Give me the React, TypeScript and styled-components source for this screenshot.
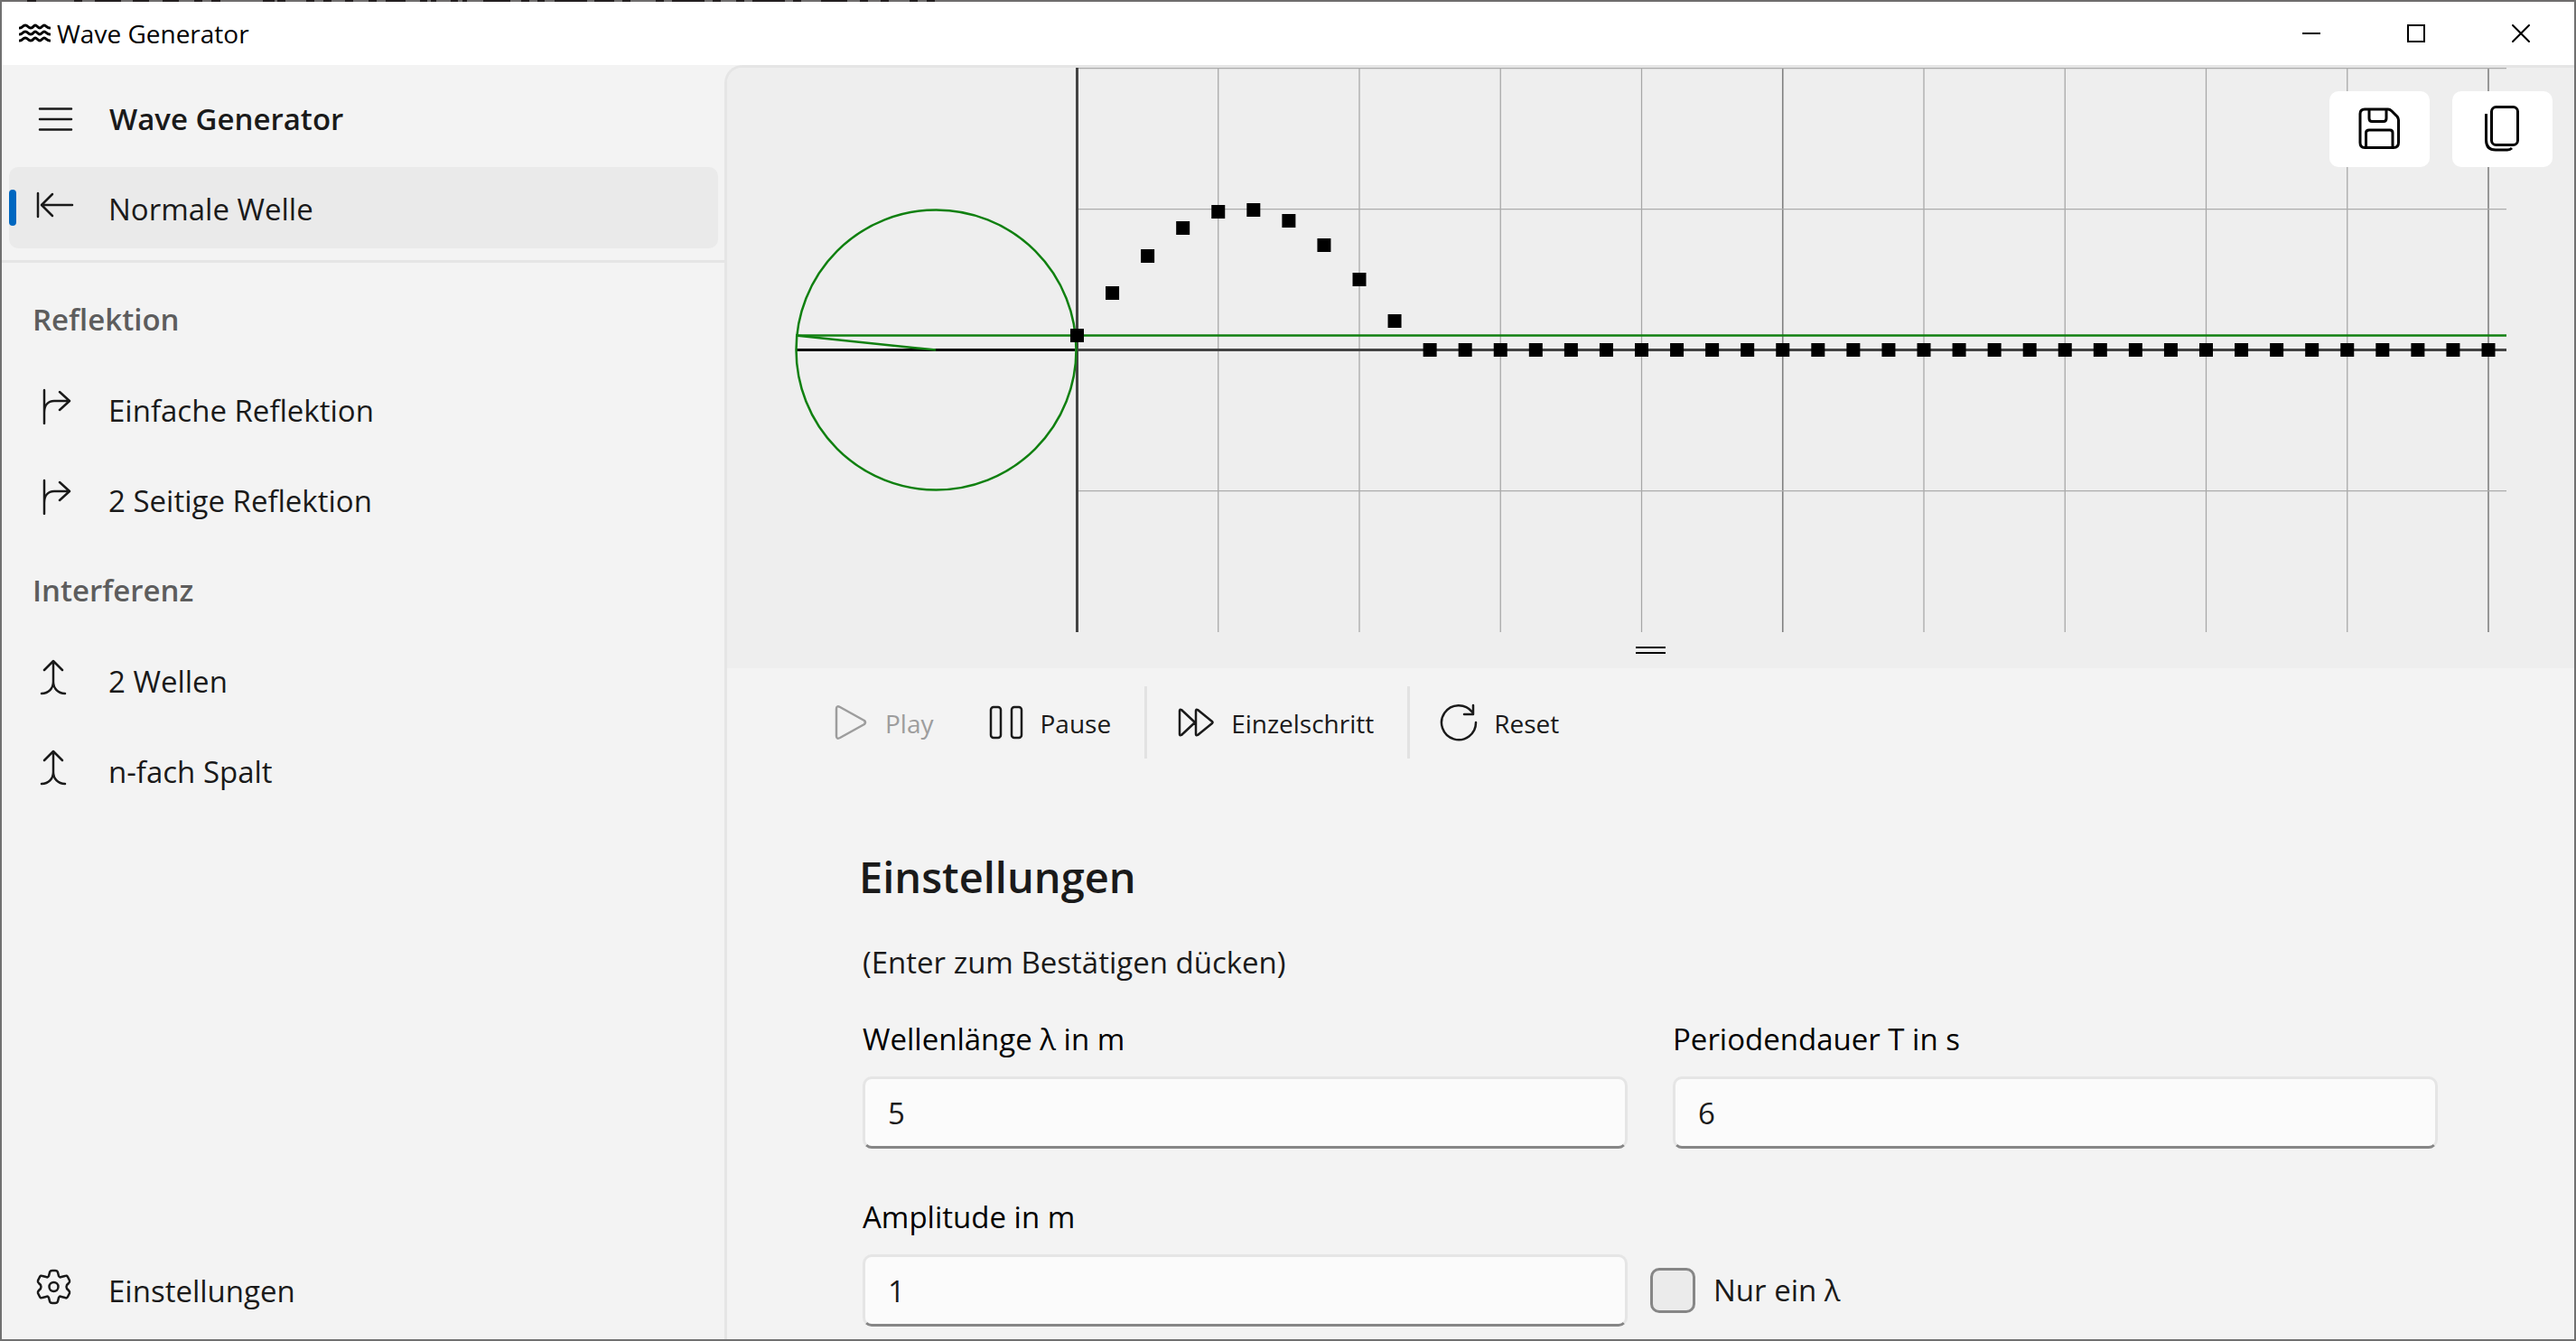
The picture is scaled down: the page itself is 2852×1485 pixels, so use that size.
import React, { useState } from "react";
import styled, { createGlobalStyle, css } from "styled-components";

const GlobalStyle = createGlobalStyle`
  * { box-sizing: border-box; }
  html, body { margin: 0; height: 100%; }
  #root { height: 100%; }
  body, button, input { font-family: "Open Sans", "Noto Sans", sans-serif; }
  body { color: #1a1a1a; font-size: 33px; line-height: 44px; background: #f3f3f3; }
`;

/* Dark runs of the lettering behind the window that show through its top edge. */
const edgeRuns = [
  [30, 40], [82, 91], [105, 134], [147, 165], [180, 198], [215, 224], [234, 244],
  [291, 304], [307, 316], [339, 348], [358, 367], [382, 391], [408, 417], [427, 449],
  [465, 473], [477, 483], [499, 507], [512, 517], [535, 565], [577, 586], [595, 603],
  [614, 650], [658, 680], [689, 698], [726, 735], [744, 780], [789, 798], [815, 824],
  [833, 869], [878, 887], [909, 938], [952, 961], [975, 984], [1007, 1016], [1026, 1035],
];

const edgeStops = edgeRuns
  .map(([a, b]) => `#6f6d6d ${a}px, #231f20 ${a}px ${b}px, #6f6d6d ${b}px`)
  .join(", ");

const Window = styled.div`
  display: flex;
  flex-direction: column;
  height: 100vh;
  border: 2px solid #707070;
  border-top-width: 0;
  overflow: hidden;
`;

const TopEdge = styled.div`
  flex: none;
  height: 2px;
  margin: 0 -2px;
  background: linear-gradient(90deg, ${edgeStops});
`;

const TitleBar = styled.header`
  flex: none;
  display: flex;
  align-items: center;
  height: 70px;
  padding: 0 1px 0 19px;
  background: #fff;
  color: #000;
  font-size: 28px;
`;

const AppName = styled.span`
  flex: 1;
  padding-left: 7px;
`;

const CaptionButton = styled.button`
  display: grid;
  place-items: center;
  width: 116px;
  height: 100%;
  padding: 0;
  border: 0;
  background: none;
  color: #000;
`;

const Body = styled.div`
  flex: 1;
  display: flex;
  min-height: 0;
`;

const Sidebar = styled.nav`
  flex: none;
  display: flex;
  flex-direction: column;
  width: 800px;
  padding: 8px 0 5px;
`;

const rowBox = css`
  display: flex;
  align-items: center;
  width: 100%;
  height: 100px;
`;

const PaneHeader = styled.div`
  ${rowBox}
  padding-top: 4px;
  font-weight: 600;
`;

const MenuButton = styled.button`
  display: grid;
  place-items: center start;
  width: 119px;
  height: 90px;
  padding: 0 0 0 39px;
  border: 0;
  background: none;
  color: inherit;
`;

const GroupTitle = styled.h2`
  ${rowBox}
  margin: 0;
  padding: 2px 0 0 34px;
  color: #5d5d5d;
  font-size: 33px;
  font-weight: 600;
`;

const NavButton = styled.button<{ $active?: boolean }>`
  display: flex;
  align-items: center;
  height: 90px;
  margin: 5px 7px 5px 8px;
  padding: 0;
  border: 0;
  border-radius: 10px;
  background: ${(p) => (p.$active ? "#eaeaea" : "none")};
  color: inherit;
  font-size: 33px;
  line-height: 44px;
  text-align: left;

  &::before {
    content: "";
    width: 8px;
    height: 40px;
    margin-right: 22px;
    border-radius: 4px;
    background: ${(p) => (p.$active ? "#0067c0" : "none")};
  }
`;

const NavIcon = styled.span`
  display: flex;
  width: 80px;
  padding-bottom: 6px;
`;

const NavLabel = styled.span`
  padding-top: 4px;
`;

const Rule = styled.hr`
  width: 100%;
  height: 3px;
  margin: 8px 0 12px;
  border: 0;
  background: #e5e5e5;
`;

const Spacer = styled.div`
  flex: 1;
`;

const Main = styled.main`
  position: relative;
  flex: 1;
  display: flex;
  flex-direction: column;
  min-width: 0;
  border: solid #e5e5e5;
  border-width: 3px 0 0 3px;
  border-radius: 20px 0 0 0;
  overflow: hidden;
`;

const ChartPane = styled.section`
  flex: none;
  background: #eeeeee;
`;

const Chart = styled.svg`
  display: block;
  width: 100%;
  height: auto;
`;

const Splitter = styled.button`
  display: flex;
  flex-direction: column;
  align-items: center;
  gap: 4px;
  width: 100%;
  height: 40px;
  padding: 16px 0 0;
  border: 0;
  background: none;
`;

const SplitterLine = styled.span`
  width: 33px;
  height: 2px;
  background: #000;
`;

const ChartActions = styled.div`
  position: absolute;
  top: 26px;
  right: 24px;
  display: flex;
  gap: 25px;
`;

const ActionButton = styled.button`
  display: grid;
  place-items: center;
  width: 111px;
  height: 84px;
  padding: 0 2px 2px 0;
  border: 0;
  border-radius: 10px;
  background: #fff;
  color: #000;
`;

const Toolbar = styled.div`
  flex: none;
  display: flex;
  align-items: center;
  height: 120px;
  padding-left: 94px;
`;

const ToolButton = styled.button`
  display: flex;
  align-items: center;
  gap: 18px;
  height: 80px;
  padding: 0 37px 0 23px;
  border: 0;
  background: none;
  color: #1a1a1a;
  font-size: 28px;
  line-height: 40px;

  &:disabled { color: #9d9d9d; }
`;

const ToolLabel = styled.span`
  padding-top: 2px;
`;

const ToolDivider = styled.span`
  width: 3px;
  height: 80px;
  margin-right: 10px;
  background: #e2e2e2;
`;

const Settings = styled.form`
  padding: 77px 126px 0 125px;
`;

const SettingsTitle = styled.h1`
  margin: 0;
  padding-left: 21px;
  font-size: 47px;
  font-weight: 600;
  line-height: 68px;
`;

const Hint = styled.p`
  margin: 0;
  padding: 39px 25px 0;
`;

const Fields = styled.div`
  display: grid;
  grid-template-columns: 1fr 1fr;
  row-gap: 54px;
  padding-top: 41px;
`;

const Field = styled.div`
  display: flex;
  flex-direction: column;
  gap: 19px;
  padding: 0 25px;
  color: #000;
`;

const TextBox = styled.input`
  width: 100%;
  height: 80px;
  padding: 0 25px;
  border: 3px solid #e5e5e5;
  border-bottom-color: #868686;
  border-radius: 10px;
  outline: 0;
  background: #fbfbfb;
  color: #1a1a1a;
  font-size: 33px;
`;

const CheckField = styled.label`
  display: flex;
  align-items: center;
  align-self: end;
  gap: 20px;
  height: 80px;
`;

const CheckBox = styled.input`
  appearance: none;
  width: 50px;
  height: 50px;
  margin: 0;
  border: 3px solid #868686;
  border-radius: 10px;
  background: #ebebeb;

  &:checked { background: #0067c0; }
`;

type IconProps = { w: number; h: number; stroke?: number; children: React.ReactNode };

const Icon = ({ w, h, stroke = 2.5, children }: IconProps) => (
  <svg
    width={w}
    height={h}
    viewBox={`0 0 ${w} ${h}`}
    fill="none"
    stroke="currentColor"
    strokeWidth={stroke}
    strokeLinecap="round"
    strokeLinejoin="round"
    aria-hidden="true"
  >
    {children}
  </svg>
);

const wave = (y: number) =>
  `M1 ${y + 3} C4 ${y + 3} 4 ${y} 7 ${y} S10 ${y + 3} 13 ${y + 3} S16 ${y} 18 ${y} S21 ${y + 3} 23 ${y + 3} S26 ${y} 28 ${y} S31 ${y + 3} 34 ${y + 3}`;

const WavesIcon = () => (
  <Icon w={35} h={22} stroke={3}>
    <path d={wave(2)} />
    <path d={wave(9)} />
    <path d={wave(16)} />
  </Icon>
);

const MenuIcon = () => (
  <Icon w={40} h={28}>
    <path d="M3 2.500H38M3 14H38M3 25.500H38" />
  </Icon>
);

const StartIcon = () => (
  <Icon w={42} h={40}>
    <path d="M2 7V33M40 20H7M18 8L6 20L18 32" />
  </Icon>
);

const BranchIcon = () => (
  <Icon w={42} h={40}>
    <path d="M9 2V39M9 27C9 19 13 14 20 14H36M26 4L37 14L26 24" />
  </Icon>
);

const MergeIcon = () => (
  <Icon w={42} h={40}>
    <path d="M19 2V25C19 32 14 38 6 38M19 25C19 32 24 38 32 38M9 12L19 2L29 12" />
  </Icon>
);

const GearIcon = () => (
  <Icon w={42} h={40}>
    <path d="M15 4Q15.500 2 18 2H21Q23.500 2 24 4L25 8Q26 10 28 9L32 8Q34 7 35 9L37 13Q37.500 15 36 16L34 18Q33 20 34 22L36 24Q37.500 25.500 37 27L35 31Q34 33 32 32L28 31Q26 30 25 32L24 36Q23.500 38 21 38H18Q15.500 38 15 36L14 32Q13 30 11 31L7 32Q5 33 4 31L2 27Q1.500 25.500 3 24L5 22Q6 20 5 18L3 16Q1.500 15 2 13L4 9Q5 7 7 8L11 9Q13 10 14 8Z" />
    <circle cx="19.5" cy="20" r="5" />
  </Icon>
);

const PlayIcon = () => (
  <Icon w={40} h={40}>
    <path d="M4 5Q4 1 8 3L35 18Q37 20 35 22L8 37Q4 39 4 35Z" />
  </Icon>
);

const PauseIcon = () => (
  <Icon w={40} h={40}>
    <rect x="3" y="3" width="11" height="34" rx="3" />
    <rect x="26" y="3" width="11" height="34" rx="3" />
  </Icon>
);

const StepIcon = () => (
  <Icon w={42} h={40}>
    <path d="M3 7Q3 5 5 6L20 20L5 34Q3 35 3 33ZM21 7Q21 5 23 6L39 19Q40 20 39 21L23 34Q21 35 21 33Z" />
  </Icon>
);

const ResetIcon = () => (
  <Icon w={42} h={42}>
    <path d="M40 21A19 19 0 1 1 36 9.500M37 2V12H27" />
  </Icon>
);

const SaveIcon = () => (
  <Icon w={46} h={46} stroke={3}>
    <path d="M7 2H33Q35 2 37 4L43 10Q44.500 12 44.500 14V39Q44.500 44.500 39 44.500H7Q2 44.500 2 39V7Q2 2 7 2Z" />
    <path d="M12 3V12Q12 15.500 15 15.500H28Q31 15.500 31 12V3M8.500 44V28Q8.500 25 12 25H35Q38 25 38 28V44" />
  </Icon>
);

const CopyIcon = () => (
  <Icon w={46} h={52} stroke={3}>
    <rect x="11.500" y="2.500" width="29" height="42" rx="5" />
    <path d="M5.500 10V39Q5.500 50 16 50H29Q32 50 34 48" strokeLinecap="butt" />
  </Icon>
);

const ORIGIN_X = 387.5;
const AXIS_Y = 312.5;
const UNIT = 156;
const STEP = 156.25;
const DOT = 15;
const START = 16;
const DISPLACEMENT = [START, 63, 104, 135, 153, 155, 143, 116, 78, 32];

const WaveChart = () => {
  const dots = Array.from({ length: 41 }, (_, i) => ({
    x: ORIGIN_X + (i * STEP) / 4,
    y: AXIS_Y - (DISPLACEMENT[i] ?? 0),
  }));
  const columns = Array.from({ length: 10 }, (_, i) => i + 1);
  return (
    <Chart viewBox="0 0 2045 625" role="img" aria-label="Normale Welle">
      {columns.map((k) => (
        <line
          key={k}
          x1={ORIGIN_X + k * STEP}
          x2={ORIGIN_X + k * STEP}
          y1="0"
          y2="625"
          stroke={k % 5 === 0 ? "#808080" : "#a6a6a6"}
          strokeWidth={k % 5 === 0 ? 1.6 : 1.25}
        />
      ))}
      {[0.5, AXIS_Y - UNIT, AXIS_Y + UNIT].map((y) => (
        <line key={y} x1={ORIGIN_X} x2="1970" y1={y} y2={y} stroke="#acacac" strokeWidth="1.25" />
      ))}
      <g stroke="#434343" strokeWidth="3">
        <line x1={ORIGIN_X} x2={ORIGIN_X} y1="0" y2="625" />
        <line x1={ORIGIN_X} x2="1970" y1={AXIS_Y} y2={AXIS_Y} />
      </g>
      <line x1="76" x2={ORIGIN_X - 2} y1={AXIS_Y} y2={AXIS_Y} stroke="#000" strokeWidth="3" />
      <g stroke="#108010" strokeWidth="2.5" fill="none">
        <circle cx="231.5" cy={AXIS_Y} r="155" />
        <line x1="76" x2="1970" y1={AXIS_Y - START} y2={AXIS_Y - START} />
        <line x1="76" x2="231" y1={AXIS_Y - START} y2={AXIS_Y} />
      </g>
      {dots.map((d) => (
        <rect key={d.x} x={d.x - DOT / 2} y={d.y - DOT / 2} width={DOT} height={DOT} fill="#000" />
      ))}
    </Chart>
  );
};

type NavItem = { label: string; icon: React.ReactNode };

const groups: { title: string; items: NavItem[] }[] = [
  {
    title: "Reflektion",
    items: [
      { label: "Einfache Reflektion", icon: <BranchIcon /> },
      { label: "2 Seitige Reflektion", icon: <BranchIcon /> },
    ],
  },
  {
    title: "Interferenz",
    items: [
      { label: "2 Wellen", icon: <MergeIcon /> },
      { label: "n-fach Spalt", icon: <MergeIcon /> },
    ],
  },
];

const NavEntry = ({ label, icon, active }: NavItem & { active?: boolean }) => (
  <NavButton type="button" $active={active} aria-current={active ? "page" : undefined}>
    <NavIcon>{icon}</NavIcon>
    <NavLabel>{label}</NavLabel>
  </NavButton>
);

type ToolProps = { label: string; icon: React.ReactNode; disabled?: boolean };

const Tool = ({ label, icon, disabled }: ToolProps) => (
  <ToolButton type="button" disabled={disabled}>
    {icon}
    <ToolLabel>{label}</ToolLabel>
  </ToolButton>
);

const NumberField = ({ id, label, initial }: { id: string; label: string; initial: string }) => {
  const [value, setValue] = useState(initial);
  return (
    <Field>
      <label htmlFor={id}>{label}</label>
      <TextBox id={id} value={value} onChange={(e) => setValue(e.target.value)} />
    </Field>
  );
};

export default function App() {
  return (
    <>
      <GlobalStyle />
      <Window>
        <TopEdge />
        <TitleBar>
          <WavesIcon />
          <AppName>Wave Generator</AppName>
          <CaptionButton type="button" aria-label="Minimieren">
            <Icon w={20} h={20} stroke={2}><path d="M0 10H20" /></Icon>
          </CaptionButton>
          <CaptionButton type="button" aria-label="Maximieren">
            <Icon w={20} h={20} stroke={2}><path d="M1 1H19V19H1Z" strokeLinejoin="miter" /></Icon>
          </CaptionButton>
          <CaptionButton type="button" aria-label="Schließen">
            <Icon w={20} h={20} stroke={2}><path d="M1 1L19 19M19 1L1 19" /></Icon>
          </CaptionButton>
        </TitleBar>
        <Body>
          <Sidebar>
            <PaneHeader>
              <MenuButton type="button" aria-label="Navigation"><MenuIcon /></MenuButton>
              Wave Generator
            </PaneHeader>
            <NavEntry label="Normale Welle" icon={<StartIcon />} active />
            <Rule />
            {groups.map((g) => (
              <React.Fragment key={g.title}>
                <GroupTitle>{g.title}</GroupTitle>
                {g.items.map((item) => (
                  <NavEntry key={item.label} {...item} />
                ))}
              </React.Fragment>
            ))}
            <Spacer />
            <NavEntry label="Einstellungen" icon={<GearIcon />} />
          </Sidebar>
          <Main>
            <ChartPane>
              <WaveChart />
              <Splitter type="button" aria-label="Größe ändern">
                <SplitterLine />
                <SplitterLine />
              </Splitter>
            </ChartPane>
            <ChartActions>
              <ActionButton type="button" aria-label="Speichern"><SaveIcon /></ActionButton>
              <ActionButton type="button" aria-label="Kopieren"><CopyIcon /></ActionButton>
            </ChartActions>
            <Toolbar>
              <Tool label="Play" icon={<PlayIcon />} disabled />
              <Tool label="Pause" icon={<PauseIcon />} />
              <ToolDivider />
              <Tool label="Einzelschritt" icon={<StepIcon />} />
              <ToolDivider />
              <Tool label="Reset" icon={<ResetIcon />} />
            </Toolbar>
            <Settings>
              <SettingsTitle>Einstellungen</SettingsTitle>
              <Hint>(Enter zum Bestätigen dücken)</Hint>
              <Fields>
                <NumberField id="wavelength" label="Wellenlänge λ in m" initial="5" />
                <NumberField id="period" label="Periodendauer T in s" initial="6" />
                <NumberField id="amplitude" label="Amplitude in m" initial="1" />
                <CheckField>
                  <CheckBox type="checkbox" />
                  Nur ein λ
                </CheckField>
              </Fields>
            </Settings>
          </Main>
        </Body>
      </Window>
    </>
  );
}
